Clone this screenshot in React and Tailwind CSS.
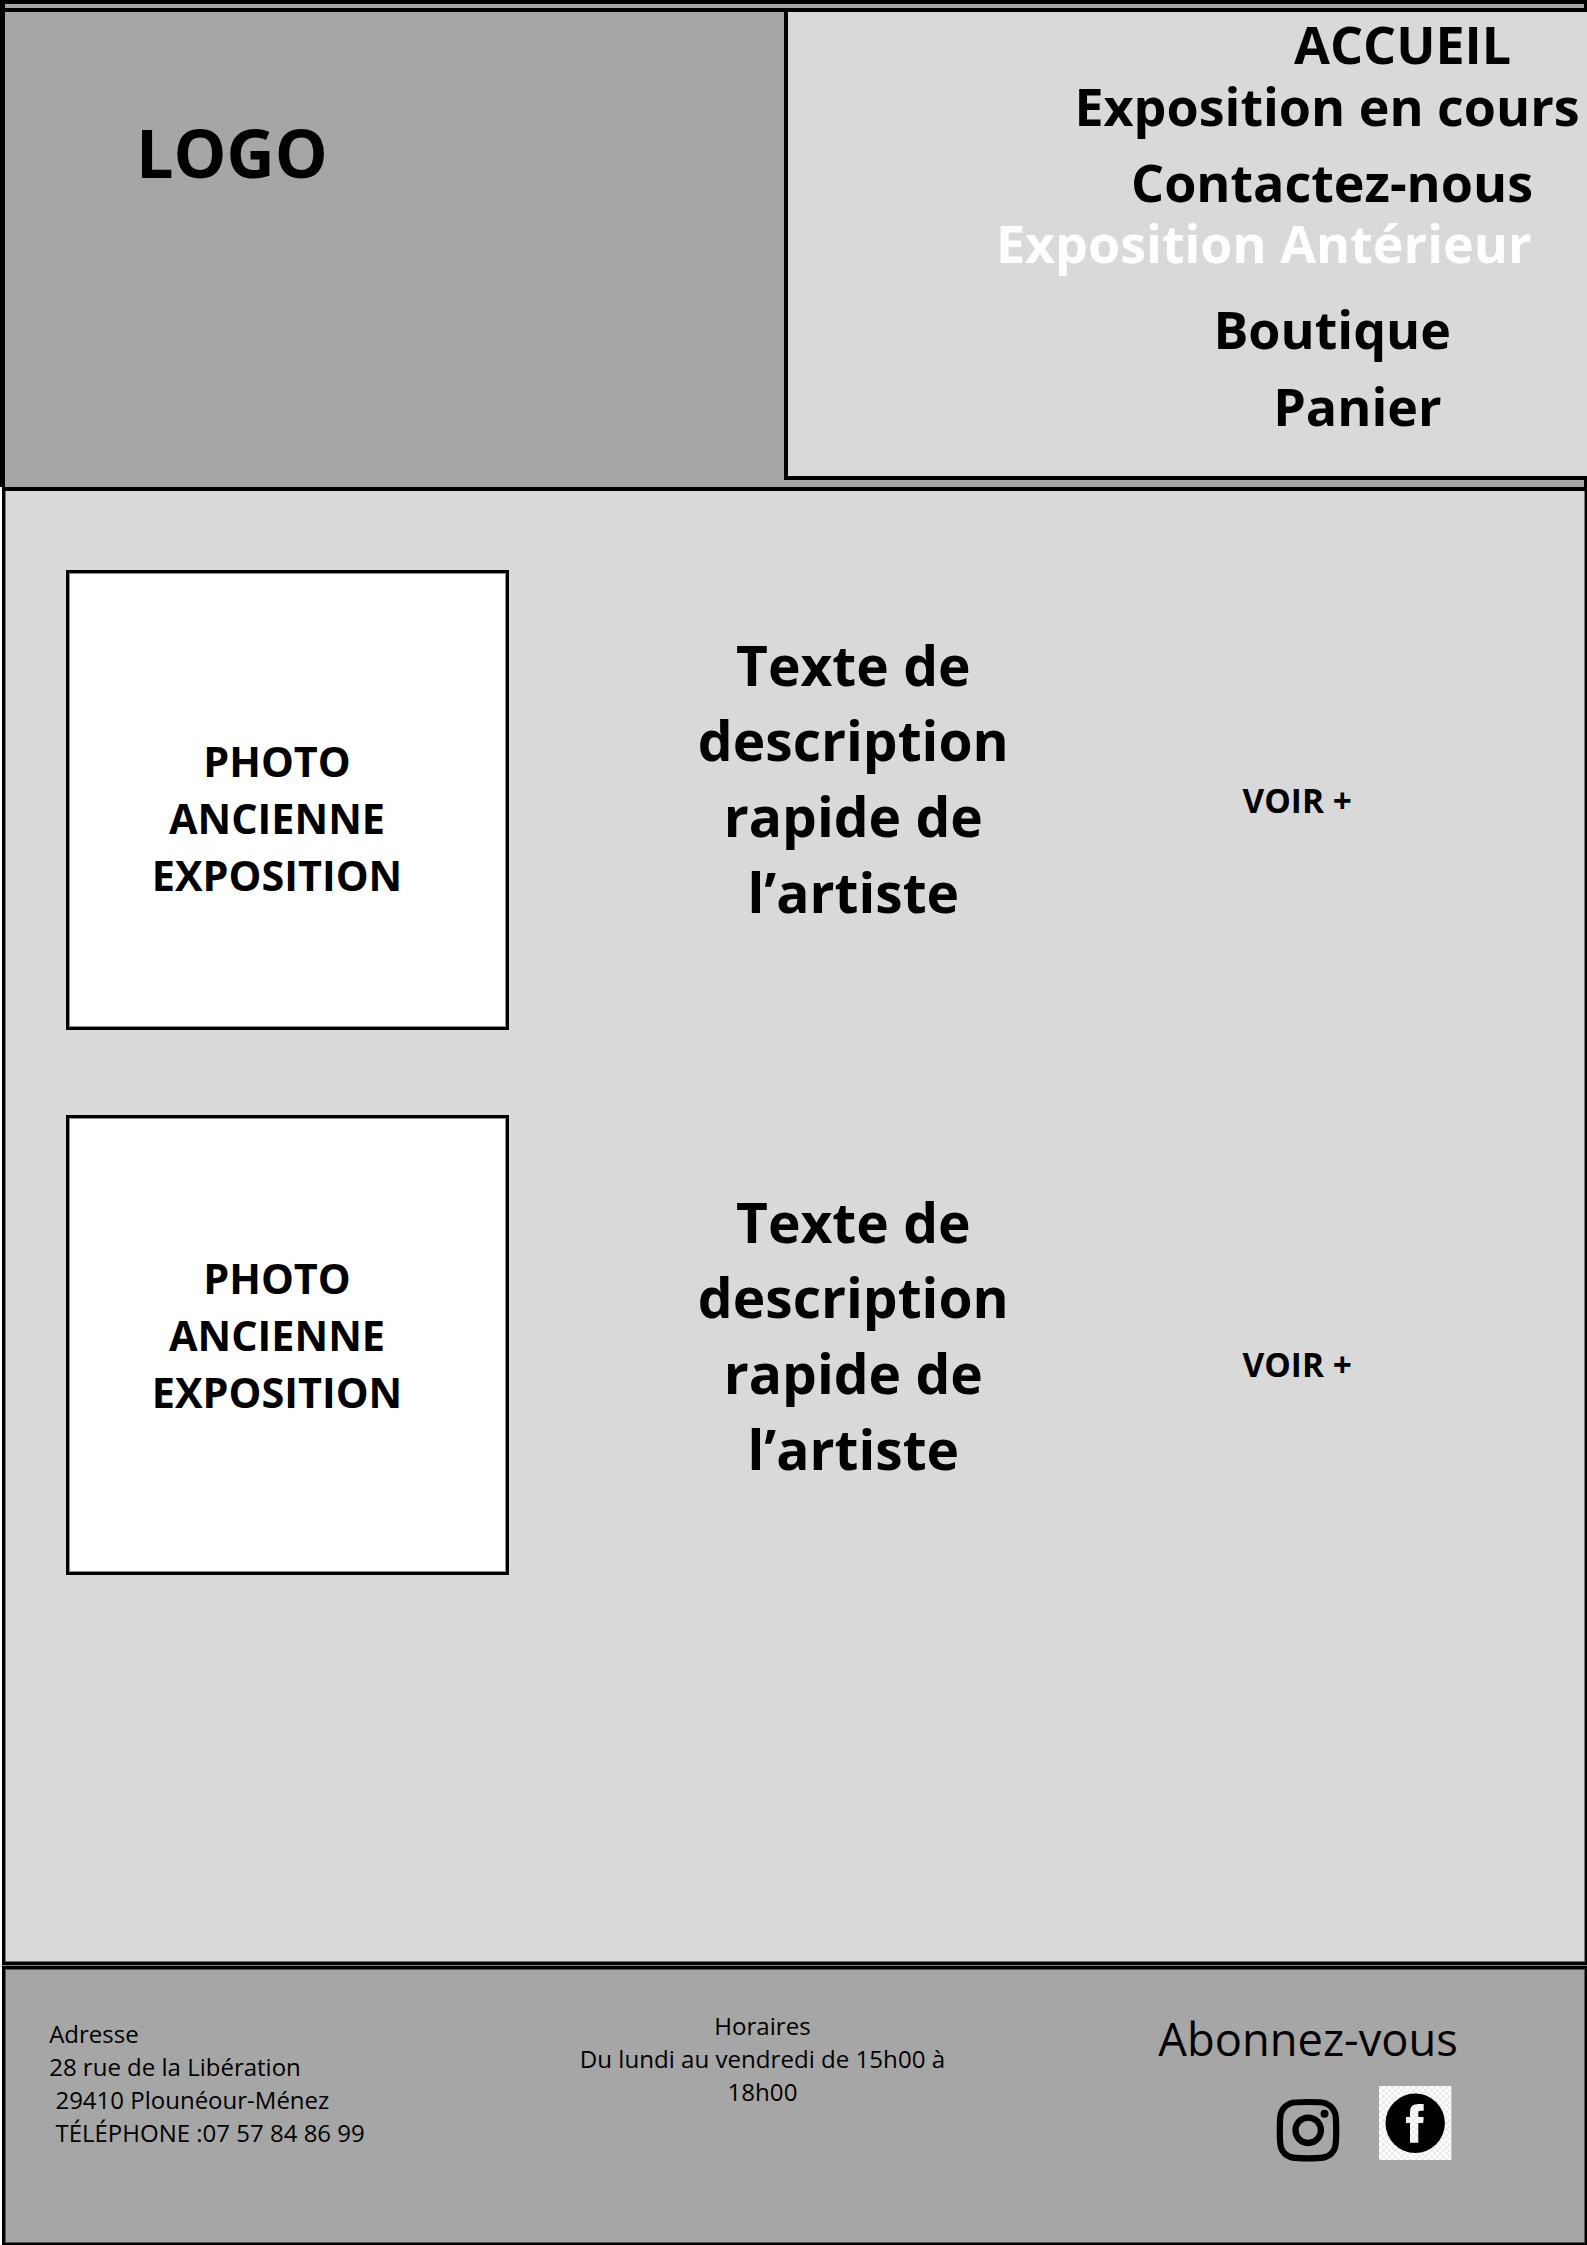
import React from "react";

const links = [
  { label: "ACCUEIL", place: "mt-px ml-[506px]" },
  { label: "Exposition en cours", place: "mt-px ml-[286.4px]" },
  { label: "Contactez-nous", place: "mt-[15px] ml-[343px]" },
  { label: "Exposition Antérieur", place: "ml-[207.9px] text-white" },
  { label: "Boutique", place: "mt-[25px] ml-[425.4px]" },
  { label: "Panier", place: "mt-4 ml-[485.2px]" },
];

const expositions = [
  { id: 1, photo: "pt-[159.5px]", text: "mt-[56.6px]", more: "mt-[207px]" },
  { id: 2, photo: "pt-[131.5px]", text: "mt-[68.6px]", more: "mt-[226px]" },
];

function Header() {
  return (
    <header className="flex h-[487px] flex-col border-t-4 border-l-[5px] border-black bg-[#a6a6a6]">
      <div className="h-1 border-r-[3px] border-black" />
      <div className="flex h-[472px] border-t-4 border-black">
        <div className="w-[779px] pt-[95px] pl-[131px]">
          <h1 className="text-[66.6px] leading-[91px] font-bold">LOGO</h1>
        </div>
        <nav className="flex flex-1 flex-col items-start border-b-4 border-l-4 border-black bg-[#d9d9d9]">
          {links.map((link) => (
            <a
              key={link.label}
              className={`text-[52px] leading-[61px] font-bold whitespace-nowrap ${link.place}`}
            >
              {link.label}
            </a>
          ))}
        </nav>
      </div>
      <div className="flex-1 border-r-[3px] border-black" />
    </header>
  );
}

function Exposition({ photo, text, more }) {
  return (
    <article className="flex h-[460px] items-start">
      <div
        className={`h-[460px] w-[443px] border-[3px] border-black bg-white pr-[21px] text-center text-[41.4px] leading-[57px] font-bold shadow-[inset_0_0_0_1px_#8c8c8c] ${photo}`}
      >
        PHOTO
        <br />
        ANCIENNE
        <br />
        EXPOSITION
      </div>
      <p
        className={`ml-[184.3px] w-[320px] text-center text-[55.1px] leading-[75.7px] font-bold ${text}`}
      >
        Texte de description rapide de l’artiste
      </p>
      <a className={`ml-[229.3px] text-[33.4px] leading-[46px] font-bold whitespace-nowrap ${more}`}>
        VOIR +
      </a>
    </article>
  );
}

function InstagramIcon() {
  return (
    <svg className="mt-3 ml-[117.7px] h-16 w-16" viewBox="0 0 64 64" fill="none" stroke="#000">
      <path
        d="M32 4C42 4 46 4 49.500 5.300C54 7 57.500 10.500 59 15C60.200 18.500 60.200 22 60.200 32.300C60.200 42.500 60.200 46 59 49.500C57.500 54 54 57.500 49.500 59C46 60.300 42 60.300 32 60.300C22 60.300 18 60.300 14.500 59C10 57.500 6.500 54 5 49.500C3.800 46 3.800 42.500 3.800 32.300C3.800 22 3.800 18.500 5 15C6.500 10.500 10 7 14.500 5.300C18 4 22 4 32 4Z"
        strokeWidth="6.200"
      />
      <circle cx="32.200" cy="32.300" r="12.700" strokeWidth="6.300" />
      <circle cx="48.500" cy="15.800" r="4" fill="#000" stroke="none" />
    </svg>
  );
}

function FacebookIcon() {
  return (
    <svg className="ml-[39.3px] h-[74px] w-[72.4px]" viewBox="0 0 72.400 74">
      <defs>
        <pattern id="checker" width="6" height="6" patternUnits="userSpaceOnUse">
          <rect width="6" height="6" fill="#fff" />
          <rect width="3" height="3" fill="#ececec" />
          <rect x="3" y="3" width="3" height="3" fill="#ececec" />
        </pattern>
      </defs>
      <rect width="72.400" height="74" fill="url(#checker)" />
      <circle cx="36.200" cy="37.200" r="29.700" fill="#000" />
      <path
        d="M44.700 18V24.700H41.500C39.800 24.700 39.300 25.500 39.300 27V31H44.700L44.200 37H39.300V56.700H31V37H27V31H31V26.500C31 20.800 33.800 18 39.500 18Z"
        fill="url(#checker)"
      />
    </svg>
  );
}

function Footer() {
  return (
    <footer className="ml-0.5 flex h-[279px] items-start border-t-[3px] border-r-2 border-b-2 border-l-[3px] border-black bg-[#a6a6a6] shadow-[inset_0_0_0_1px_#555]">
      <address className="mt-[48px] ml-[44.2px] w-[522.8px] text-[24px] leading-[33.1px] whitespace-pre not-italic">
        {"Adresse\n28 rue de la Libération\n 29410 Plounéour-Ménez\n TÉLÉPHONE :07 57 84 86 99"}
      </address>
      <p className="mt-[39.7px] w-[381px] text-center text-[24.1px] leading-[33.1px]">
        Horaires
        <br />
        Du lundi au vendredi de 15h00 à<br />
        18h00
      </p>
      <div className="mt-[39px] ml-[205.3px]">
        <h2 className="text-[45.3px] leading-[61px]">Abonnez-vous</h2>
        <div className="mt-[17px] flex items-start">
          <InstagramIcon />
          <FacebookIcon />
        </div>
      </div>
    </footer>
  );
}

export default function App() {
  return (
    <div className="flex h-[2245px] w-[1587px] flex-col overflow-hidden bg-white font-['Open_Sans',sans-serif] text-black">
      <Header />
      <main className="ml-0.5 flex h-[1478px] flex-col gap-[85px] border-t-4 border-r-2 border-b-[3px] border-l-[3px] border-black bg-[#d9d9d9] pt-[79px] pl-[61px] shadow-[inset_0_-1px_0_#666,inset_1px_0_0_#777,inset_-1px_0_0_#777]">
        {expositions.map(({ id, ...rest }) => (
          <Exposition key={id} {...rest} />
        ))}
      </main>
      <div className="ml-0.5 h-px bg-[#808080]" />
      <Footer />
    </div>
  );
}
